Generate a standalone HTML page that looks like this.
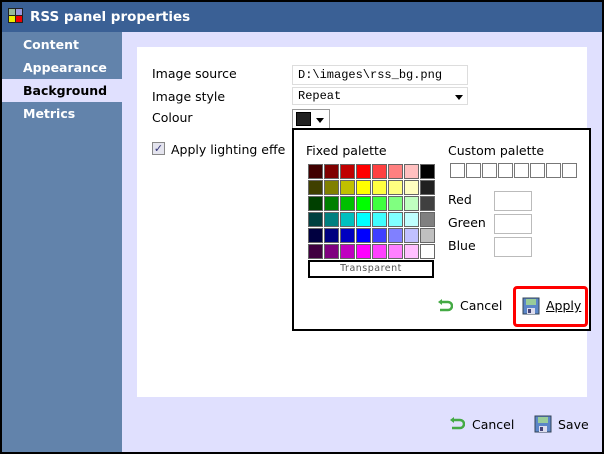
<!DOCTYPE html>
<html><head><style>
*{margin:0;padding:0;box-sizing:border-box}
body{width:604px;height:454px;overflow:hidden;background:#000;font-family:"DejaVu Sans","Liberation Sans",sans-serif;font-size:12.5px;position:relative}
.a{position:absolute}
#title{left:2px;top:2px;width:600px;height:30px;background:#3a6095;color:#fff;font-weight:bold;font-size:13.5px}
#side{left:2px;top:32px;width:120px;height:420px;background:#6283ab}
.nav{position:absolute;left:0;width:120px;height:23px;color:#fff;font-weight:bold;font-size:12.5px;padding-left:21px;line-height:23px}
#main{left:122px;top:32px;width:480px;height:420px;background:#e0e0fe}
#panel{left:137px;top:47px;width:450px;height:350px;background:#fff}
.lbl{color:#000;font-size:12.5px;white-space:nowrap}
.inp{border:1px solid #ddd;background:#fff;font-family:"Liberation Mono",monospace;font-size:12px;padding-left:5px}
.cell{position:absolute;width:15px;height:15px;border:1px solid #666}
.cp{position:absolute;width:15px;height:15px;border:1px solid #777;background:#fff}
.rgb{position:absolute;left:494px;width:38px;height:20px;border:1px solid #bbb;background:#fff}
</style></head><body>
<div class="a" id="title">
<div class="a" style="left:6px;top:6px;width:15px;height:15px;background:#222;padding:1px">
<div class="a" style="left:1px;top:1px;width:6px;height:6px;background:#9b9"></div>
<div class="a" style="left:8px;top:1px;width:6px;height:6px;background:#99d"></div>
<div class="a" style="left:1px;top:8px;width:6px;height:6px;background:#ee0"></div>
<div class="a" style="left:8px;top:8px;width:6px;height:6px;background:#e00"></div>
</div>
<div class="a" style="left:28px;top:7px">RSS panel properties</div>
</div>
<div class="a" id="side">
<div class="nav" style="top:1px">Content</div>
<div class="nav" style="top:24px">Appearance</div>
<div class="nav" style="top:47px;background:#e0e0fe;color:#000">Background</div>
<div class="nav" style="top:70px">Metrics</div>
</div>
<div class="a" id="main"></div>
<div class="a" id="panel"></div>
<div class="a lbl" style="left:152px;top:66px">Image source</div>
<div class="a lbl" style="left:152px;top:89px">Image style</div>
<div class="a lbl" style="left:152px;top:110px">Colour</div>
<div class="a inp" style="left:292px;top:65px;width:176px;height:20px;line-height:18px">D:\images\rss_bg.png</div>
<div class="a inp" style="left:292px;top:87px;width:176px;height:18px;line-height:16px">Repeat<span style="position:absolute;right:4px;top:7px;border-left:4px solid transparent;border-right:4px solid transparent;border-top:5px solid #000"></span></div>
<div class="a" style="left:292px;top:109px;width:38px;height:20px;border:1px solid #999;background:#fff">
<div class="a" style="left:3px;top:2px;width:15px;height:14px;background:#222;border:1px solid #000"></div>
<div class="a" style="left:23px;top:8px;border-left:4px solid transparent;border-right:4px solid transparent;border-top:5px solid #000"></div>
</div>
<div class="a" style="left:152px;top:142px;width:13px;height:13px;border:1px solid #888;background:#e4e4ee;color:#337;font-size:11px;line-height:11px;text-align:center">✓</div>
<div class="a lbl" style="left:171px;top:142px">Apply lighting effe</div>
<div class="a" style="left:292px;top:128px;width:299px;height:203px;border:2px solid #000;background:#fff"></div>
<div class="a lbl" style="left:306px;top:143px">Fixed palette</div>
<div class="a lbl" style="left:448px;top:143px">Custom palette</div>
<div id="grid"></div>
<div class="a" style="left:308px;top:260px;width:126px;height:18px;border:2px solid #000;text-align:center;font-size:9.5px;color:#555;line-height:14px;letter-spacing:0.5px">Transparent</div>
<div class="a lbl" style="left:448px;top:192px">Red</div>
<div class="a lbl" style="left:448px;top:215px">Green</div>
<div class="a lbl" style="left:448px;top:238px">Blue</div>
<div class="rgb" style="top:191px"></div>
<div class="rgb" style="top:214px"></div>
<div class="rgb" style="top:237px"></div>
<svg class="a" style="left:437px;top:298px" width="16" height="16" viewBox="0 0 16 16"><path d="M4 4 H11 A4 4 0 0 1 11 12 H3" fill="none" stroke="#4a4" stroke-width="2.5"/><path d="M1 4 L5 1 L5 7Z" fill="#4a4"/></svg>
<div class="a lbl" style="left:460px;top:298px">Cancel</div>
<div class="a" style="left:513px;top:286px;width:75px;height:41px;border:3px solid #f00;border-radius:4px"></div>
<svg class="a" style="left:522px;top:297px" width="18" height="18" viewBox="0 0 18 18"><rect x="1" y="1" width="16" height="16" fill="#5b86c8" stroke="#345" stroke-width="1"/><rect x="4" y="2" width="10" height="6" fill="#9c9"/><rect x="5" y="11" width="8" height="6" fill="#dde"/><rect x="6" y="12" width="3" height="4" fill="#447"/></svg>
<div class="a lbl" style="left:546px;top:298px;text-decoration:underline">Apply</div>
<svg class="a" style="left:449px;top:416px" width="16" height="16" viewBox="0 0 16 16"><path d="M4 4 H11 A4 4 0 0 1 11 12 H3" fill="none" stroke="#4a4" stroke-width="2.5"/><path d="M1 4 L5 1 L5 7Z" fill="#4a4"/></svg>
<div class="a lbl" style="left:472px;top:417px">Cancel</div>
<svg class="a" style="left:534px;top:415px" width="18" height="18" viewBox="0 0 18 18"><rect x="1" y="1" width="16" height="16" fill="#5b86c8" stroke="#345" stroke-width="1"/><rect x="4" y="2" width="10" height="6" fill="#9c9"/><rect x="5" y="11" width="8" height="6" fill="#dde"/><rect x="6" y="12" width="3" height="4" fill="#447"/></svg>
<div class="a lbl" style="left:558px;top:417px">Save</div>
<script>
var c=[["#400000","#800000","#c00000","#ff0000","#ff4040","#ff8080","#ffc0c0","#000000"],["#404000","#808000","#c0c000","#ffff00","#ffff40","#ffff80","#ffffc0","#202020"],["#004000","#008000","#00c000","#00ff00","#40ff40","#80ff80","#c0ffc0","#404040"],["#004040","#008080","#00c0c0","#00ffff","#40ffff","#80ffff","#c0ffff","#808080"],["#000040","#000080","#0000c0","#0000ff","#4040ff","#8080ff","#c0c0ff","#c0c0c0"],["#400040","#800080","#c000c0","#ff00ff","#ff40ff","#ff80ff","#ffc0ff","#ffffff"]];
var h="";for(var r=0;r<6;r++)for(var i=0;i<8;i++)h+='<div class="cell" style="left:'+(308+i*16)+'px;top:'+(164+r*16)+'px;background:'+c[r][i]+'"></div>';
for(var i=0;i<8;i++)h+='<div class="cp" style="left:'+(450+i*16)+'px;top:163px"></div>';
document.getElementById("grid").innerHTML=h;
</script>
</body></html>
